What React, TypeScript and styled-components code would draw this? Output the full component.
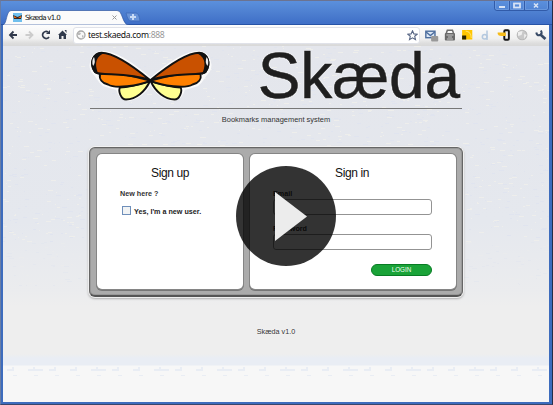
import React from "react";
import styled, { createGlobalStyle } from "styled-components";

const GlobalStyle = createGlobalStyle`
  * { box-sizing: border-box; }
  html, body { margin: 0; padding: 0; overflow: hidden; }
  body { font-family: "Liberation Sans", Arial, sans-serif; color: #222; }
`;

const Window = styled.div`
  position: relative;
  width: 553px;
  height: 405px;
  display: flex;
  flex-direction: column;
  background: #3d6cbd;
  border-top: 1px solid #6b7391;
  border-left: 1px solid #687da6;
  border-right: 1px solid #242d48;
  border-bottom: 1px solid #39466b;
  overflow: hidden;
`;

const TitleBar = styled.header`
  display: flex;
  justify-content: space-between;
  height: 24px;
  flex: none;
  background: linear-gradient(#5b90dd, #4d7fd0 50%, #4070c8 90%);
  box-shadow: inset 0 -1px #2753a6;
`;

const TabStrip = styled.div`
  display: flex;
  align-items: flex-end;
  padding-left: 2px;
`;

const Tab = styled.div`
  position: relative;
  width: 126px;
  height: 15px;
  display: flex;
  align-items: center;
  padding: 0 12px 0 10px;
  font: 7.2px "DejaVu Sans", sans-serif;
  letter-spacing: -0.78px;
  color: #111;
`;

const TabShape = styled.svg`
  position: absolute;
  inset: 0;
`;

const TabIcon = styled.svg`
  position: relative;
  margin-right: 3px;
`;

const TabTitle = styled.span`
  position: relative;
  flex: 1;
  white-space: nowrap;
`;

const TabClose = styled.svg`
  position: relative;
`;

const NewTab = styled.svg`
  margin: 0 0 3px -4px;
`;

const Controls = styled.svg`
  display: block;
  margin-right: 3px;
`;

const Frame = styled.div`
  flex: 1;
  min-height: 0;
  display: flex;
  flex-direction: column;
  margin: 0 3px 2px 2px;
  background: #f7f7f7;
`;

const Toolbar = styled.div`
  flex: none;
  height: 21px;
  display: flex;
  align-items: center;
  padding: 0 0 1px 5px;
  background: linear-gradient(#fdfdfd, #f0f0f0 65%, #dedede 86%, #d8d8d8);
`;

const NavIcons = styled.svg`
  flex: none;
`;

const Address = styled.div`
  width: 347px;
  height: 17px;
  flex: none;
  margin-left: 4px;
  display: flex;
  align-items: center;
  padding: 0 1px 0 2px;
  border: 1px solid #e0e2e9;
  border-radius: 3px;
  background: #fff;
  font: 8.6px "Noto Sans", sans-serif;
  color: #111;
`;

const Url = styled.span`
  flex: 1;
  margin-left: 2px;
  white-space: nowrap;
  letter-spacing: -0.33px;
`;

const Port = styled.span`
  color: #999;
`;

const ToolIcons = styled.svg`
  flex: none;
  margin-left: 4px;
`;

const Page = styled.main`
  position: relative;
  flex: 1;
  min-height: 0;
  display: flex;
  flex-direction: column;
  align-items: center;
  padding: 5px 0 0 0;
  background: linear-gradient(#e4e6ec 0, #e5e8ee 175px, #ebecee 245px, #eee 260px, #eee 308px, #e9edf4 312px, #e9edf4 319px, #f7f7f7 320px);
`;

const Texture = styled.svg`
  position: absolute;
  inset: 0;
`;

const Masthead = styled.div`
  position: relative;
  width: 372px;
  height: 58px;
  display: flex;
  justify-content: space-between;
  border-bottom: 1px solid #777;
`;

const Butterfly = styled.svg`
  margin: -1px 0 0 -1px;
  overflow: visible;
`;

const Wordmark = styled.h1`
  margin: -11px 2px 0 0;
  font-size: 64px;
  line-height: 73px;
  font-weight: 400;
  letter-spacing: -0.1px;
  color: #1f1f1f;
  white-space: nowrap;
  -webkit-text-stroke: 0.5px #1f1f1f;
  text-shadow: 0 0 2px #fff, 0 0 2px #fff;
`;

const Tagline = styled.p`
  position: relative;
  margin: 5px 0 0;
  height: 12px;
  font-size: 7.45px;
  line-height: 12px;
  color: #333;
`;

const Panel = styled.section`
  position: relative;
  width: 374px;
  height: 150px;
  margin-top: 21px;
  display: grid;
  grid-template-columns: 146px 206px;
  column-gap: 7px;
  padding: 6px 6px 6px 7px;
  border: 1px solid #666;
  border-bottom: 2px solid #555;
  border-radius: 6px;
  background: #ababab;
  box-shadow: inset 0 0 0 1px #999, 0 0 1px 1px #f6f6f6, 0 1px 2px 1px #aaa;
`;

const Card = styled.div`
  display: flex;
  flex-direction: column;
  padding: 11px 24px 0 23px;
  border-radius: 5px;
  background: #fff;
  box-shadow: 0 0 0 1px #858585, 0 1px 0 1px #777;
`;

const CardTitle = styled.h2<{ $shift: number }>`
  margin: 0 0 0 ${(p) => p.$shift}px;
  height: 17px;
  font-size: 12px;
  line-height: 17px;
  font-weight: 400;
  letter-spacing: -0.36px;
  color: #111;
`;

const Label = styled.label<{ $gap: number }>`
  margin-top: ${(p) => p.$gap}px;
  height: 10px;
  font-size: 7.2px;
  line-height: 10px;
  font-weight: 700;
  color: #333;
`;

const CheckRow = styled.label`
  display: flex;
  align-items: center;
  gap: 3px;
  height: 10px;
  margin: 7px 0 0 2px;
  font-size: 7.2px;
  font-weight: 700;
  color: #222;
  white-space: nowrap;
`;

const Checkbox = styled.span`
  width: 9px;
  height: 9px;
  margin-top: -1px;
  border: 1px solid #6f8fba;
  background: #f1f3f4;
`;

const Input = styled.input`
  width: 159px;
  height: 16px;
  padding: 0 4px;
  flex: none;
  border: 1px solid #939393;
  border-radius: 3px;
  background: #fff;
  outline: none;
`;

const Login = styled.button`
  align-self: flex-end;
  width: 61px;
  height: 12px;
  margin-top: 14px;
  padding: 0;
  border: 1px solid #087c24;
  border-radius: 6px;
  background: #1aa338;
  color: #f2fff2;
  font: 6.3px/10px "Liberation Sans", Arial, sans-serif;
`;

const Footer = styled.footer`
  position: relative;
  margin-top: 30px;
  font-size: 7.2px;
  line-height: 10px;
  color: #333;
  text-shadow: 0 0 2px #fff;
`;

const PlayButton = styled.button`
  position: absolute;
  left: 235px;
  top: 165px;
  width: 100px;
  height: 100px;
  padding: 0;
  border: 0;
  border-radius: 50%;
  background: rgba(0, 0, 0, 0.8);
  cursor: pointer;
`;

const PlayGlyph = styled.svg`
  display: block;
`;

const hash = (n: number) => {
  const v = Math.sin(n * 12.9898) * 43758.5453;
  return v - Math.floor(v);
};

const flecks = Array.from({ length: 1900 }, (_, i) => {
  const x = Math.floor(hash(i + 1) * 546);
  const y = Math.floor(hash(i + 5000) * 240);
  return { x, y, w: 1 + Math.floor(hash(i + 9000) * 5), light: i % 2 === 0 };
});

const PaperTexture = () => (
  <Texture width="546" height="356" shapeRendering="crispEdges">
    {flecks.map((f, i) => (
      <rect key={i} x={f.x} y={f.y} width={f.w} height="1" fill={f.light ? "#eeeeeb" : "#dfe3ee"} opacity={f.y > 195 ? 0.4 : 0.9} />
    ))}
    {Array.from({ length: 26 }, (_, i) => (
      <g key={i} fill="#e9edf4">
        <rect x={4 + i * 21} y="323" width={i % 3 === 1 ? 15 : 7} height="2" />
        <rect x={9 + i * 21} y="321" width="2" height="3" />
        <rect x={10 + i * 21} y="329" width="4" height="1" />
      </g>
    ))}
  </Texture>
);

const Wing = () => (
  <g stroke="#111" strokeWidth="1.9" strokeLinejoin="round">
    <path d="M60 31 C50 34 40 37 30 37.5 C28 41 31 49.5 36 49.5 C46 49 55 42 60 31Z" fill="#ffff91" />
    <path d="M60 30.5 C40 25 20 22 10 24 C9 29 12 33 18 34.5 C25 39 48 36 60 31Z" fill="#ff8000" />
    <path d="M60 30 C43 16 25 3 11.5 2.7 C3 3.2 -1 13 5 22 C9 26 38 22 60 30Z" fill="#c95100" />
    <path d="M13 2.5 C1.5 1 -2.5 15 5 23 L9 25 C5 17 4 8 13 3.5Z" fill="#111" stroke="none" />
    <path d="M4 7 Q1 11 3.2 16 Q6 12 4 7Z" fill="#ececec" stroke="none" />
  </g>
);

export default function App() {
  return (
    <>
      <GlobalStyle />
      <Window>
        <TitleBar>
          <TabStrip>
            <Tab>
              <TabShape width="126" height="15">
                <path d="M0 15 C4 14 3 1 8 .5 H114 C120 .5 119 15 126 15Z" fill="#fbfbfb" stroke="#3157a0" strokeWidth=".7" />
              </TabShape>
              <TabIcon width="9" height="9">
                <rect width="9" height="9" fill="#6fbfed" />
                <path d="M0 2 L4.5 4 L9 2 L8 6 H1Z" fill="#342421" />
                <path d="M1 3 L4 5 H1Z M8 3 L5 5 H8Z" fill="#e86c13" />
              </TabIcon>
              <TabTitle>Skæda v1.0</TabTitle>
              <TabClose width="5" height="5"><path d="M.5 .5 L4.5 4.5 M4.5 .5 L.5 4.5" stroke="#999" /></TabClose>
            </Tab>
            <NewTab width="16" height="10">
              <path d="M1 1 H11 Q14 1 15 9 H6 Q3 9 1 1Z" fill="#6893d8" stroke="#3c68b5" strokeWidth=".7" />
              <path d="M8 2 V8 M5 5 H11" stroke="#c9dbf5" strokeWidth="2" />
            </NewTab>
          </TabStrip>
          <Controls width="55" height="11" fill="none">
            <path d="M.5 0 V7 Q.5 9.5 3 9.5 H52 Q54.5 9.5 54.5 7 V0 M15.5 0 V9 M30.5 0 V9" stroke="#315ba9" />
            <path d="M1.5 0 V7 Q1.5 8.5 3 8.5 H14.5 V0 M16.5 0 V8.5 H29.5 V0 M31.5 0 V8.5 H52 Q53.5 8.5 53.5 7 V0" stroke="#729fe1" strokeWidth=".7" />
            <path d="M5 6 H11" stroke="#d7e3f5" strokeWidth="2" />
            <rect x="20" y="2.5" width="6" height="4" stroke="#d7e3f5" strokeWidth="1.8" />
            <path d="M40 2.5 L44 6.5 M44 2.5 L40 6.5" stroke="#d7e3f5" strokeWidth="1.6" />
          </Controls>
        </TitleBar>
        <Frame>
          <Toolbar>
            <NavIcons width="61" height="14" fill="none" strokeWidth="1.8">
              <path d="M9 7 H2 M5.5 3.5 L2 7 L5.5 10.5" stroke="#30394b" />
              <path d="M17.5 7 H24.5 M21 3.5 L24.5 7 L21 10.5" stroke="#ccc" />
              <path d="M41 9 A3.5 3.5 0 1 1 40 4" stroke="#30394b" />
              <path d="M42 2 V6 H38Z" fill="#30394b" />
              <path d="M50 7 L54.5 2.5 L59 7 H58 V11 H55.5 V8 H53.5 V11 H51 V7Z M56.5 2 H58.5 V5Z" fill="#30394b" />
            </NavIcons>
            <Address>
              <svg width="10" height="10" fill="none">
                <circle cx="5" cy="5" r="4" fill="#f8f8f8" stroke="#aaa" strokeWidth="1.3" />
                <path d="M2 2 L5 3 L4 5 L2 5Z M6 5 L8 6 L6 8Z" fill="#bbb" />
              </svg>
              <Url>test.skaeda.com<Port>:888</Port></Url>
              <svg width="11" height="11" viewBox="0 0 11 11">
                <path d="M5.5 .8 L6.9 3.9 L10.2 4.2 L7.7 6.3 L8.5 9.7 L5.5 7.9 L2.5 9.7 L3.3 6.3 L.8 4.2 L4.1 3.9Z" fill="#fff" stroke="#596785" strokeWidth="1.1" />
              </svg>
            </Address>
            <ToolIcons width="125" height="16" viewBox="0 0 123 16" preserveAspectRatio="none" fill="none">
              <rect x="1.8" y="4.2" width="9" height="6.5" fill="#dce7f5" stroke="#4d6e9e" strokeWidth="1.4" />
              <path d="M2 5 L6.3 8.5 L10.5 5" stroke="#4d6e9e" strokeWidth="1.4" />
              <rect x="7" y="9" width="7" height="5.5" rx="1" fill="#999" />
              <path d="M22 6 L23 3.2 H28 L29 6" stroke="#6c6c6c" strokeWidth="1.5" />
              <rect x="20.5" y="6" width="10" height="7.5" rx="1" fill="#696969" />
              <path d="M22 8 H29 M23.5 10 H27.5 M22.5 12 H28.5" stroke="#c8c8c8" />
              <rect x="37.5" y="3" width="10" height="9.5" fill="#ffc600" />
              <path d="M37.5 8.5 H41.5 V12.5 H37.5Z" fill="#292400" />
              <path d="M41 4 Q46.5 5 46.5 11" stroke="#ffe064" />
              <circle cx="59.7" cy="9.8" r="2.3" stroke="#b5c9df" strokeWidth="1.5" />
              <path d="M62 3.5 V13" stroke="#b5c9df" strokeWidth="1.5" />
              <rect x="79" y="3.2" width="4.5" height="9.5" rx="1" fill="#f3f3f3" stroke="#151515" strokeWidth="1.9" />
              <path d="M72.5 5.5 H80.5 V9 H76 Q73 9 72.5 7Z" fill="#f6bb18" />
              <circle cx="96.5" cy="8" r="4.8" fill="#c9c9c9" stroke="#b8b8b8" />
              <path d="M92.5 5 L97 4 L96 8 L92.5 9Z M98.5 7 L101 8 L98.5 12Z" fill="#eee" />
              <path d="M114 7 L119.5 12" stroke="#394b67" strokeWidth="2.7" />
              <path d="M110.5 5.5 Q111 9 114 8 Q117 7 115 3.5" stroke="#394b67" strokeWidth="2" />
            </ToolIcons>
          </Toolbar>
          <Page>
            <PaperTexture />
            <Masthead>
              <Butterfly width="125" height="55" viewBox="-1 0 125 55">
                <path
                  d="M60 30 C43 15 25 3 12 3 C2 4 -1 17 5 23 C8 26 10 31 14 34 L28 38 C30 46 33 49 38 49 C48 47 55 42 60.5 31 C66 42 73 47 83 49 C89 48 92 44 93 38 L107 34 C111 31 113 26 116 23 C122 17 119 4 109 3 C96 3 78 15 61 30Z"
                  fill="#fff"
                  stroke="#fafafa"
                  strokeWidth="4.5"
                  strokeLinejoin="round"
                />
                <Wing />
                <g transform="translate(120.6 0) scale(-1 1)"><Wing /></g>
              </Butterfly>
              <Wordmark>Skæda</Wordmark>
            </Masthead>
            <Tagline>Bookmarks management system</Tagline>
            <Panel>
              <Card>
                <CardTitle $shift={31}>Sign up</CardTitle>
                <Label $gap={7} htmlFor="newUser">New here ?</Label>
                <CheckRow id="newUser"><Checkbox />Yes, I'm a new user.</CheckRow>
              </Card>
              <Card>
                <CardTitle $shift={62}>Sign in</CardTitle>
                <Label $gap={7} htmlFor="email">Email</Label>
                <Input id="email" />
                <Label $gap={9} htmlFor="password">Password</Label>
                <Input id="password" type="password" />
                <Login>LOGIN</Login>
              </Card>
            </Panel>
            <Footer>Skæda v1.0</Footer>
          </Page>
        </Frame>
        <PlayButton aria-label="Play">
          <PlayGlyph width="100" height="100"><path d="M39 26 L71 50.5 L39 75Z" fill="#ececec" /></PlayGlyph>
        </PlayButton>
      </Window>
    </>
  );
}
